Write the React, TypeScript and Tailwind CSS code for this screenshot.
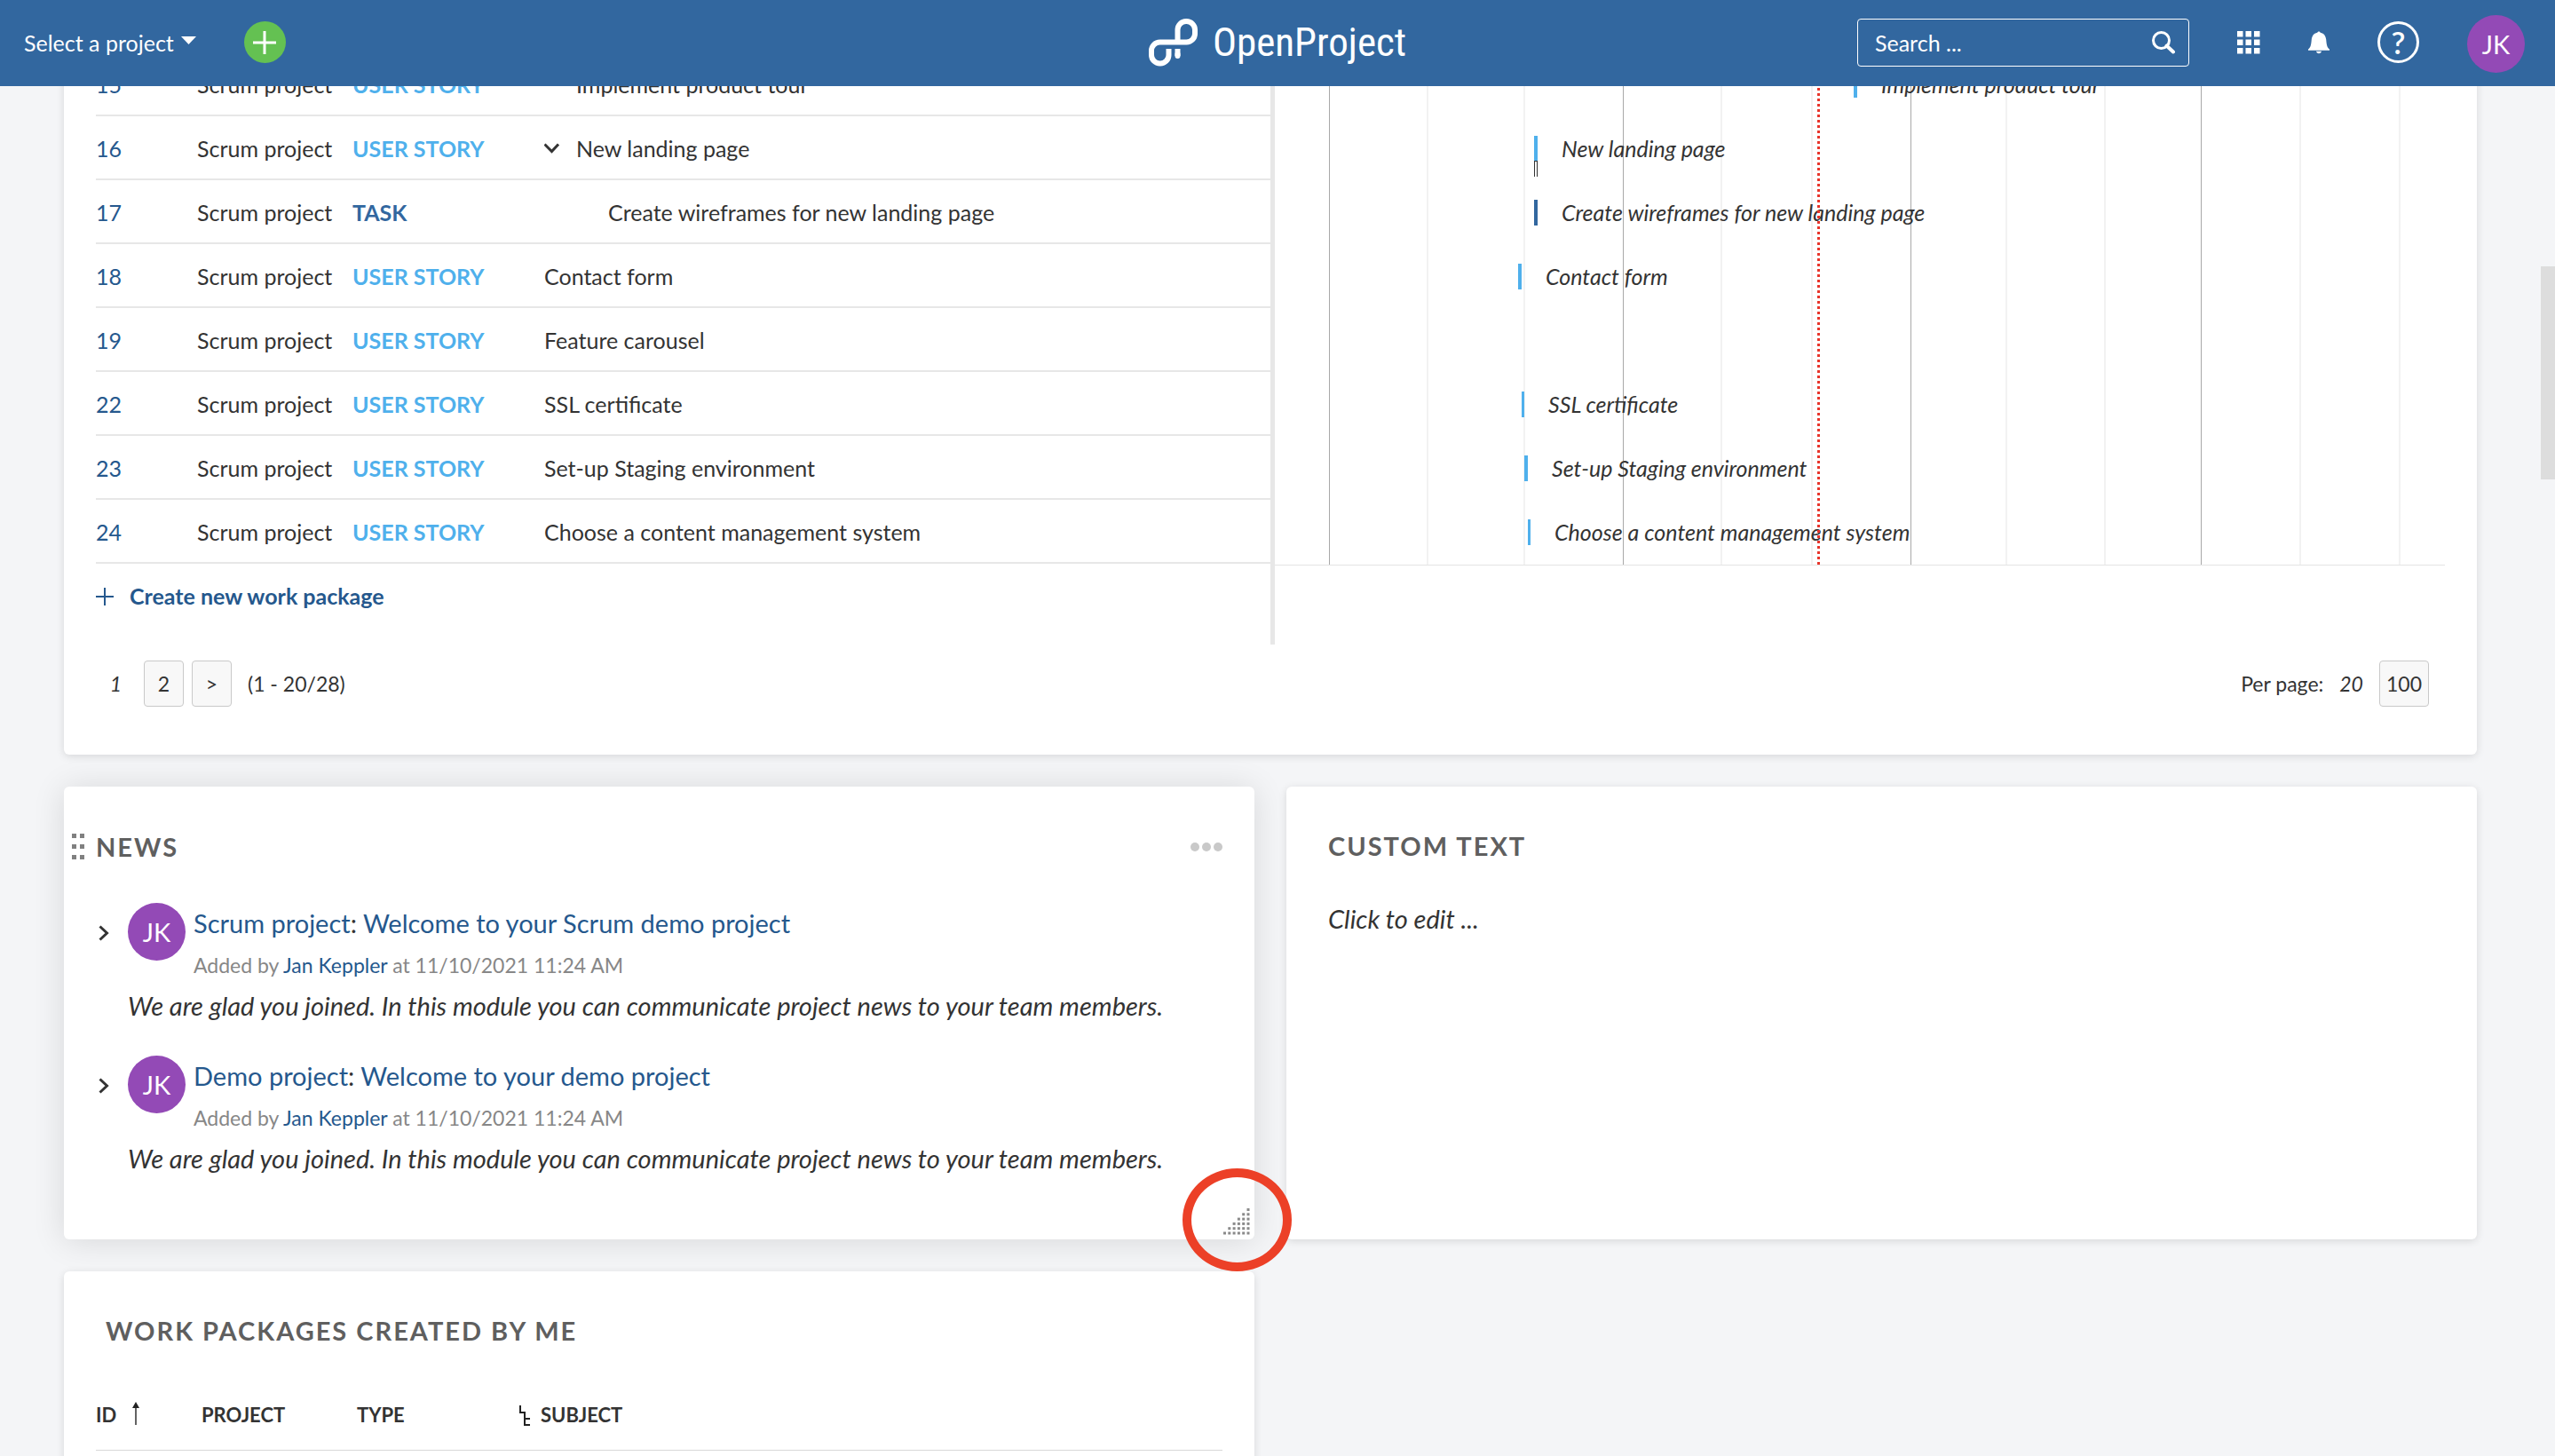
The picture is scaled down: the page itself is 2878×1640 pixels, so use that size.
import React from "react";

const PURPLE = "bg-[#934ab6]";

type Row = {
  id: number;
  type: "USER STORY" | "TASK";
  subject: string;
  indent?: "leaf" | "parent" | "child";
  start?: number;
  length?: number;
};

const rows: Row[] = [
  { id: 15, type: "USER STORY", subject: "Implement product tour", indent: "leaf", start: 652, length: 4 },
  { id: 16, type: "USER STORY", subject: "New landing page", indent: "parent", start: 292, length: 4 },
  { id: 17, type: "TASK", subject: "Create wireframes for new landing page", indent: "child", start: 292, length: 4 },
  { id: 18, type: "USER STORY", subject: "Contact form", start: 274, length: 4 },
  { id: 19, type: "USER STORY", subject: "Feature carousel" },
  { id: 22, type: "USER STORY", subject: "SSL certificate", start: 278, length: 3 },
  { id: 23, type: "USER STORY", subject: "Set-up Staging environment", start: 281, length: 4 },
  { id: 24, type: "USER STORY", subject: "Choose a content management system", start: 285, length: 3 },
];

const monthLines = [61, 392, 716, 1043];
const weekLines = [171, 280, 502, 604, 823, 934, 1154, 1266];
const TODAY = 611;

function Avatar() {
  return (
    <span className={`flex size-[65px] shrink-0 items-center justify-center rounded-full ${PURPLE} text-[29px] leading-none text-white`}>
      JK
    </span>
  );
}

function Logo() {
  return (
    <a href="#home" className="flex items-center gap-4 text-white" aria-label="OpenProject home">
      <svg className="h-[54px] w-[56px]" viewBox="0 0 56 54" fill="none" stroke="currentColor" strokeWidth="6">
        <path d="M32.500 28V12.500a9.500 9.500 0 0 1 9.500-9.500h.500a9.500 9.500 0 0 1 9.500 9.500v4.500a9.500 9.500 0 0 1-9.500 9.500H12.500a9.500 9.500 0 0 0-9.500 9.500v5a9.500 9.500 0 0 0 9.500 9.500h.500a9.500 9.500 0 0 0 9.500-9.500V34" />
        <path d="M32.500 34v8" />
        <path d="M32.500 40v2" strokeLinecap="round" />
      </svg>
      <span className="font-['Roboto_Condensed','Liberation_Sans_Narrow',Roboto,sans-serif] text-[45px] leading-[54px]">OpenProject</span>
    </a>
  );
}

function Header() {
  return (
    <header className="fixed inset-x-0 top-0 z-20 grid h-[97px] grid-cols-[1fr_auto_1fr] items-center bg-[#32679f] px-[34px] pb-0.5 text-white">
      <div className="-ml-[7px] flex items-center gap-[54px]">
        <button type="button" className="flex items-center gap-2 text-[25px]">
          Select a project
          <svg className="mb-1 h-[9px] w-[17px]" viewBox="0 0 17 9" fill="currentColor"><path d="M0 0h17L8.500 9z" /></svg>
        </button>
        <button type="button" aria-label="Create" className="flex size-[47px] items-center justify-center rounded-full bg-[#64c152]">
          <svg className="size-[26px]" viewBox="0 0 26 26" stroke="currentColor" strokeWidth="3"><path d="M13 0v26M0 13h26" /></svg>
        </button>
      </div>
      <Logo />
      <div className="flex items-center justify-end">
        <label className="flex h-[54px] w-[374px] items-center rounded border border-white pr-[15px] pl-[19px]">
          <input type="text" aria-label="Search" placeholder="Search ..." className="min-w-0 flex-1 bg-transparent text-[25px] outline-none placeholder:text-white" />
          <svg className="size-[26px]" viewBox="0 0 26 26" fill="none" stroke="currentColor" strokeWidth="3"><circle cx="10.500" cy="10.500" r="9" /><path d="M16.500 16.500 24 23.500" strokeWidth="4" strokeLinecap="round" /></svg>
        </label>
        <button type="button" aria-label="Modules" className="ml-[54px]">
          <svg className="size-[26px]" viewBox="0 0 26 26" fill="currentColor">
            {[0, 9.5, 19].map((y) => [0, 9.5, 19].map((x) => <rect key={`${x}-${y}`} x={x} y={y} width="6.500" height="6.500" />))}
          </svg>
        </button>
        <button type="button" aria-label="Notifications" className="ml-[54px]">
          <svg className="h-[26px] w-[24px]" viewBox="0 0 24 26" fill="currentColor"><path d="M12 0.500c.900 0 1.500.600 1.700 1.300C18 2.600 19.800 6 20.200 9.500c.500 6 1 9 3.800 11v1.200H0v-1.200c2.800-2 3.300-5 3.800-11C4.200 6 6 2.600 10.300 1.800 10.500 1.100 11.100.500 12 .500zM9 22.700h6c-.300 1.500-1.500 2.500-3 2.500s-2.700-1-3-2.500z" /></svg>
        </button>
        <button type="button" aria-label="Help" className="ml-[54px] flex size-[47px] items-center justify-center rounded-full border-3 border-white text-[35px] leading-none font-semibold">?</button>
        <button type="button" aria-label="Jan Keppler" className="mt-1 ml-[54px]"><Avatar /></button>
      </div>
    </header>
  );
}

function SubjectCell({ row }: { row: Row }) {
  if (row.indent === "parent")
    return (
      <span className="flex items-center gap-[18px]">
        <button type="button" aria-label="Collapse">
          <svg className="h-3 w-[18px]" viewBox="0 0 18 12" fill="none" stroke="currentColor" strokeWidth="3"><path d="M.5 1.500 8.500 9.500l7.500-8" /></svg>
        </button>
        {row.subject}
      </span>
    );
  if (row.indent === "leaf") return <span className="pl-9">{row.subject}</span>;
  if (row.indent === "child") return <span className="pl-[72px]">{row.subject}</span>;
  return <span>{row.subject}</span>;
}

function Timeline() {
  return (
    <div className="relative h-[578px] border-b border-[#e4e4e4]">
      {weekLines.map((x) => <i key={x} className="absolute inset-y-0 w-0.5 bg-[#f2f2f2]" style={{ left: x }} />)}
      {monthLines.map((x) => <i key={x} className="absolute inset-y-0 w-px bg-[#a8a8a8]" style={{ left: x }} />)}
      {rows.map((row) => (
        <div key={row.id} className="relative h-[72px]">
          {row.start !== undefined && (
            <div className="absolute inset-y-0 flex items-center" style={{ left: row.start }}>
              <i className={`h-[29px] ${row.type === "TASK" ? "bg-[#32679f]" : "bg-[#4fb0ec]"}`} style={{ width: row.length }} />
              {row.indent === "parent" && <i className="absolute top-[50px] left-0 h-[18px] w-1 border border-b-0 border-[#333] bg-white" />}
              <em className="ml-[27px] whitespace-nowrap">{row.subject}</em>
            </div>
          )}
        </div>
      ))}
      <svg className="absolute inset-y-0 h-full w-[3px]" style={{ left: TODAY }}>
        <line x1="1.500" x2="1.500" y1="4" y2="100%" stroke="#e8342a" strokeWidth="3" strokeDasharray="3 3" />
      </svg>
    </div>
  );
}

const pageBox = "flex h-[52px] min-w-[45px] items-center justify-center rounded border border-[#c9c9c9] bg-[#f8f8f8] px-[7px]";

function WorkPackages() {
  return (
    <section className="rounded-b-md bg-white pb-[54px] shadow-[0_2px_10px_rgba(0,0,0,0.12)]">
      <div className="flex px-9">
        <div className="h-[667px] w-1/2">
          <table className="w-full table-fixed border-separate border-spacing-0 text-left">
            <tbody>
              {rows.map((row) => (
                <tr key={row.id} className="h-[72px] [&>td]:border-b-2 [&>td]:border-[#e7e7e7] [&>td]:pt-px">
                  <td className="w-[114px]"><a href={`#wp-${row.id}`} className="text-[#25588d]">{row.id}</a></td>
                  <td className="w-[175px]">Scrum project</td>
                  <td className={`w-[216px] font-bold ${row.type === "TASK" ? "text-[#32679f]" : "text-[#4fb0ec]"}`}>{row.type}</td>
                  <td><SubjectCell row={row} /></td>
                </tr>
              ))}
            </tbody>
          </table>
          <button type="button" className="mt-[18px] flex items-center gap-[18px] font-bold text-[#25588d]">
            <svg className="mt-0.5 size-5" viewBox="0 0 20 20" stroke="currentColor" strokeWidth="2"><path d="M10 0v20M0 10h20" /></svg>
            Create new work package
          </button>
        </div>
        <div className="w-1/2 border-l-5 border-[#e7e7e7]"><Timeline /></div>
      </div>
      <div className="mt-[18px] flex items-center justify-between pr-[54px] pl-9 text-[23px]">
        <div className="flex items-center gap-[9px]">
          <em className="w-[45px] text-center">1</em>
          <button type="button" className={pageBox}>2</button>
          <button type="button" className={pageBox}>&gt;</button>
          <span className="ml-[9px]">(1 - 20/28)</span>
        </div>
        <div className="flex items-center gap-[18px]">
          <span>Per page:</span>
          <em>20</em>
          <button type="button" className={pageBox}>100</button>
        </div>
      </div>
    </section>
  );
}

const heading = "text-[29px] leading-9 font-bold tracking-[2px] text-[#5f5f5f]";
const card = "rounded-md bg-white shadow-[0_2px_10px_rgba(0,0,0,0.12)]";

const news = [
  { project: "Scrum project", title: "Welcome to your Scrum demo project" },
  { project: "Demo project", title: "Welcome to your demo project" },
];

function News() {
  return (
    <section className="relative h-[510px] rounded-md bg-white pt-[50px] pr-9 pl-[9px] shadow-[0_2px_36px_rgba(0,0,0,0.12)]">
      <div className="flex items-center">
        <svg className="h-[30px] w-[27px]" viewBox="0 0 27 30" fill="#808080">
          {[0, 12, 24].map((y) => [0, 9].map((x) => <rect key={`${x}-${y}`} x={x} y={y} width="5" height="5" />))}
        </svg>
        <h2 className={heading}>NEWS</h2>
        <button type="button" aria-label="More actions" className="ml-auto">
          <svg className="h-[10px] w-9" viewBox="0 0 36 10" fill="#c9c9c9"><circle cx="5" cy="5" r="5" /><circle cx="18" cy="5" r="5" /><circle cx="31" cy="5" r="5" /></svg>
        </button>
      </div>
      <ul className="mt-[45px] flex flex-col gap-3.5 pl-7">
        {news.map((item) => (
          <li key={item.project} className="h-[158px]">
            <div className="flex">
              <button type="button" aria-label="Expand" className="flex h-[68px] w-[35px] items-center pl-0.5">
                <svg className="h-[18px] w-3" viewBox="0 0 12 18" fill="none" stroke="currentColor" strokeWidth="3"><path d="M1.500 1.500 9.500 9l-8 7.500" /></svg>
              </button>
              <Avatar />
              <div className="ml-[9px] pt-[3px]">
                <h3 className="text-[29px] leading-10">
                  <a href="#project" className="text-[#25588d]">{item.project}</a>: <a href="#news" className="text-[#25588d]">{item.title}</a>
                </h3>
                <p className="mt-[9px] text-[23px] leading-9 text-[#878787]">
                  Added by <a href="#user" className="text-[#25588d]">Jan Keppler</a> at 11/10/2021 11:24 AM
                </p>
              </div>
            </div>
            <p className="mt-2 pl-[35px] text-[29px] leading-10 italic">
              We are glad you joined. In this module you can communicate project news to your team members.
            </p>
          </li>
        ))}
      </ul>
      <svg className="absolute right-[5px] bottom-[5px] size-[30px]" viewBox="0 0 30 30" fill="#8a8a8a">
        {[0, 1, 2, 3, 4, 5].map((r) => [0, 1, 2, 3, 4, 5].filter((c) => c + r >= 5).map((c) => <rect key={`${r}-${c}`} x={c * 5.3} y={r * 5.3} width="3" height="3" />))}
      </svg>
      <i className="absolute -right-[42px] -bottom-9 z-10 h-[116px] w-[123px] rounded-[50%] border-10 border-[#ec4027]" />
    </section>
  );
}

function CustomText() {
  return (
    <section className={`${card} px-[47px] pt-[49px]`}>
      <h2 className={heading}>CUSTOM TEXT</h2>
      <button type="button" className="mt-11 text-[29px] leading-10 italic">Click to edit ...</button>
    </section>
  );
}

function CreatedByMe() {
  return (
    <section className={`${card} h-[280px] px-9 pt-[49px]`}>
      <h2 className={`${heading} pl-[11px]`}>WORK PACKAGES CREATED BY ME</h2>
      <table className="mt-[51px] w-full table-fixed border-collapse text-left text-[22px]">
        <thead>
          <tr className="h-[65px] border-b border-[#d8d8d8] [&>th]:pb-3">
            <th className="w-[119px]">
              <span className="flex items-center gap-[18px]">
                ID
                <svg className="mb-1 h-[26px] w-2" viewBox="0 0 8 26" fill="#222"><path d="M4 0 8 7H4.700v19H3.300V7H0z" /></svg>
              </span>
            </th>
            <th className="w-[175px]">PROJECT</th>
            <th className="w-[183px]">TYPE</th>
            <th>
              <span className="flex items-center gap-3">
                <svg className="h-[23px] w-3" viewBox="0 0 12 23" fill="none" stroke="#222" strokeWidth="2"><path d="M1 0v8h5v14h6M6 15h6" /></svg>
                SUBJECT
              </span>
            </th>
          </tr>
        </thead>
      </table>
    </section>
  );
}

export default function App() {
  return (
    <div className="flex h-screen overflow-hidden bg-[#f4f5f7] font-[Lato,sans-serif] text-[25px] leading-9 text-[#333]">
      <Header />
      <main className="min-w-0 flex-1 px-[72px] pt-[59px]">
        <WorkPackages />
        <div className="mt-9 grid grid-cols-2 gap-9">
          <News />
          <CustomText />
          <CreatedByMe />
        </div>
      </main>
      <div className="w-4 shrink-0 pt-[300px]">
        <div className="h-60 bg-[#dddddd]" />
      </div>
    </div>
  );
}
